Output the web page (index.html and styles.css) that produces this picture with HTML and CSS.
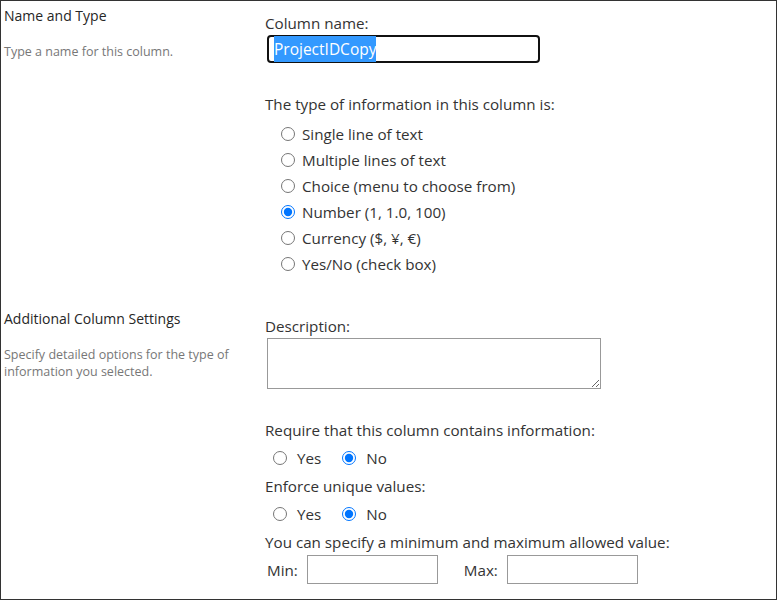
FILE: index.html
```html
<!DOCTYPE html>
<html lang="en">
<head>
    <meta charset="UTF-8">
    <meta name="viewport" content="width=device-width, initial-scale=1.0">
    <title>Create Column</title>
    <link rel="stylesheet" href="styles.css">
</head>
<body>
    <div class="frame">
        <!-- Name and Type -->
        <div class="section first">
            <div class="section-info">
                <h3>Name and Type</h3>
                <p>Type a name for this column.</p>
            </div>
            <div class="section-body">
                <label class="field-label">Column name:</label>
                <div class="name-box" role="textbox"><span class="sel">ProjectIDCopy</span></div>

                <div class="field-label type-label">The type of information in this column is:</div>
                <div class="type-list">
                    <label class="type-option"><input type="radio" name="type"> Single line of text</label>
                    <label class="type-option"><input type="radio" name="type"> Multiple lines of text</label>
                    <label class="type-option"><input type="radio" name="type"> Choice (menu to choose from)</label>
                    <label class="type-option"><input type="radio" name="type" checked> Number (1, 1.0, 100)</label>
                    <label class="type-option"><input type="radio" name="type"> Currency ($, ¥, €)</label>
                    <label class="type-option"><input type="radio" name="type"> Yes/No (check box)</label>
                </div>
            </div>
        </div>

        <!-- Additional Column Settings -->
        <div class="section">
            <div class="section-info">
                <h3>Additional Column Settings</h3>
                <p>Specify detailed options for the type of information you selected.</p>
            </div>
            <div class="section-body">
                <label class="field-label" for="desc">Description:</label>
                <textarea id="desc" class="desc-box"></textarea>

                <div class="field-label gap-top">Require that this column contains information:</div>
                <div class="yes-no">
                    <label><input type="radio" name="required"> Yes</label>
                    <label><input type="radio" name="required" checked> No</label>
                </div>

                <div class="field-label">Enforce unique values:</div>
                <div class="yes-no">
                    <label><input type="radio" name="unique"> Yes</label>
                    <label><input type="radio" name="unique" checked> No</label>
                </div>

                <div class="field-label">You can specify a minimum and maximum allowed value:</div>
                <div class="min-max">
                    <label for="min-val">Min:</label>
                    <input type="text" id="min-val" class="num-box">
                    <label for="max-val" class="max-label">Max:</label>
                    <input type="text" id="max-val" class="num-box">
                </div>
            </div>
        </div>
    </div>
</body>
</html>
```

FILE: styles.css
```css
body {
    margin: 0;
    font-family: "Open Sans", "Noto Sans", sans-serif;
    background-color: white;
    color: #333;
}
.frame {
    box-sizing: border-box;
    width: 777px;
    height: 600px;
    border: 1px solid #333;
    overflow: hidden;
}
.section {
    display: grid;
    grid-template-columns: 264px 1fr;
}
.first {
    height: 303px;
}
.section-info {
    padding: 5px 20px 0 3px;
}
.section-info h3 {
    margin: 0;
    font-size: 14px;
    font-weight: normal;
    line-height: 20px;
    color: #262626;
}
.section-info p {
    margin: 17px 0 0 0;
    font-size: 12.5px;
    line-height: 17px;
    color: #777;
}
.section-body {
    padding-top: 12px;
    display: flex;
    flex-direction: column;
    align-items: flex-start;
}
.field-label {
    font-size: 15.2px;
    line-height: 20px;
    margin-bottom: 5px;
}
.name-box {
    box-sizing: border-box;
    width: 273px;
    height: 28px;
    margin: -3px 0 0 2px;
    padding: 3px 5px;
    border: 2px solid #111;
    border-radius: 4px;
    font-size: 15.5px;
    line-height: 18px;
}
.sel {
    background-color: #3399ff;
    color: white;
    padding: 2px 0;
}
.type-label {
    margin-top: 31px;
    margin-bottom: 7px;
}
.type-list {
    display: flex;
    flex-direction: column;
}
.type-option {
    display: flex;
    align-items: center;
    gap: 7px;
    height: 26px;
    font-size: 15.2px;
    padding-left: 16px;
}
input[type="radio"] {
    width: 14px;
    height: 14px;
    margin: 0;
    accent-color: #0075ff;
}
.desc-box {
    box-sizing: border-box;
    width: 334px;
    height: 51px;
    margin: -3px 0 0 2px;
    border: 1px solid #999;
    border-radius: 0;
    font-family: inherit;
}
.gap-top {
    margin-top: 31px;
}
.yes-no {
    display: flex;
    height: 26px;
    margin-bottom: 5px;
    padding-left: 8px;
    gap: 21px;
}
.yes-no label {
    display: flex;
    align-items: center;
    gap: 10px;
    font-size: 15.2px;
}
.field-label + .min-max {
    margin-top: -2px;
}
.min-max {
    display: flex;
    align-items: center;
    font-size: 15.2px;
    padding-left: 2px;
}
.num-box {
    box-sizing: border-box;
    width: 131px;
    height: 29px;
    margin-left: 9px;
    border: 1px solid #999;
    border-radius: 0;
}
.max-label {
    margin-left: 26px;
}
```
